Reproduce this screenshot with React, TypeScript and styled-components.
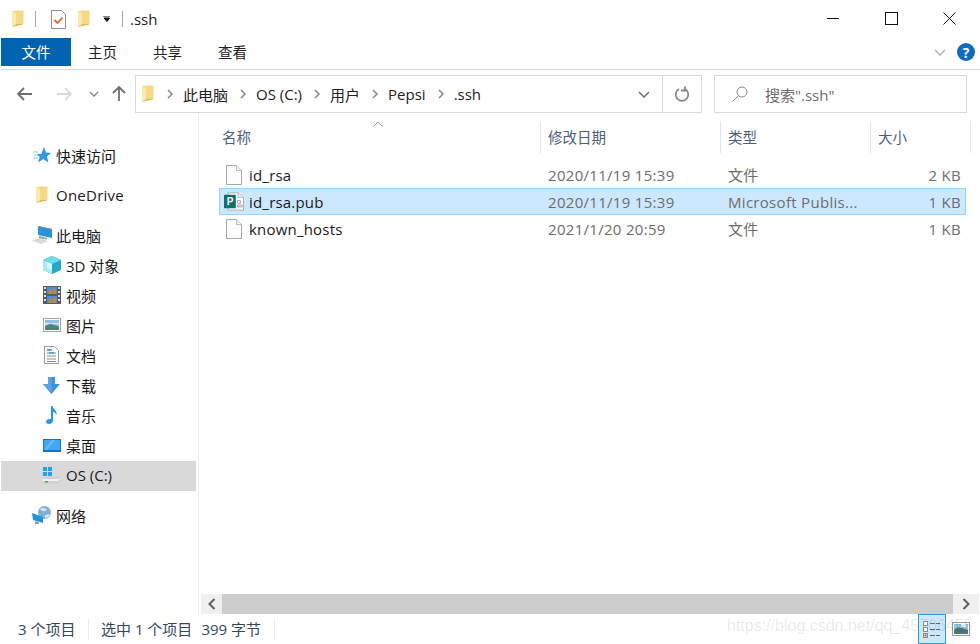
import styled, { createGlobalStyle } from 'styled-components';
import type { ReactNode } from 'react';

const GlobalStyle = createGlobalStyle`
  html, body {
    margin: 0;
    padding: 0;
    background: #fff;
  }
  body {
    font-family: "Open Sans", "Noto Sans CJK SC", sans-serif;
    font-size: 15px;
    color: #1a1a1a;
  }
`;

type IconProps = { size?: number };

const FolderIcon = () => (
  <svg width="14" height="18" viewBox="0 0 14 18">
    <path d="M1 1h11v13.5L1 17z" fill="#e9b850" />
    <path d="M1 1l4-.5h7.5V14H5z" fill="#f6d983" />
    <path d="M1 1v16l4-2.5V3z" fill="#fbe9ae" />
  </svg>
);

const BlankFileIcon = () => (
  <svg width="16" height="20" viewBox="0 0 16 20">
    <path d="M.5.5h10l5 5v14H.5z" fill="#fdfdfd" stroke="#a6a6a6" />
    <path d="M10.5.5v5h5" fill="#f2f2f2" stroke="#bdbdbd" />
  </svg>
);

const PublisherIcon = () => (
  <svg width="20" height="19" viewBox="0 0 22 20">
    <path d="M4.5.5h11l6 5v14h-17z" fill="#fff" stroke="#a6a6a6" />
    <path d="M15.5.5v5h6" fill="#eee" stroke="#b5b5b5" />
    <path d="M15 9h3v3h-3zM15 14h5v2h-5z" fill="none" stroke="#9a9a9a" />
    <rect x="0" y="2.500" width="13" height="15" rx="1" fill="#077568" />
    <text x="3" y="14" fontFamily="'Liberation Sans', sans-serif" fontSize="11" fontWeight="700" fill="#fff">
      P
    </text>
  </svg>
);

const QuickAccessIcon = () => (
  <svg width="18" height="17" viewBox="0 0 18 17">
    <path d="M11 0l2 5.6 5 .3-4 3.5 1.4 6L10.300 12 5 15.500l1.700-5.800L3.500 7h4.800z" fill="#2b9ae8" />
    <path d="M0 5h5M1 8h4M0 11h5" stroke="#8fcdf5" strokeWidth="1" />
  </svg>
);

const PcIcon = () => (
  <svg width="20" height="18" viewBox="0 0 20 18">
    <path d="M6 0l14 3v9L6 9z" fill="#2b93dd" />
    <path d="M6 0l14 3v1L6 1z" fill="#7b8b99" />
    <path d="M7 10l8 2v1.500L7 12z" fill="#8a9aa6" />
    <path d="M0 14.500L7 12l9 3-7 3z" fill="#d6dadd" />
  </svg>
);

const CubeIcon = () => (
  <svg width="18" height="18" viewBox="0 0 18 18">
    <path d="M9 0l9 4v10l-9 4-9-4V4z" fill="#21a9c6" />
    <path d="M0 4l9-4 9 4-9 4z" fill="#6fdcea" />
    <path d="M0 4l9 4v10l-9-4z" fill="#a7ecf2" />
    <path d="M4 6l5 2v6l-5-2z" fill="#d9f7f9" />
  </svg>
);

const VideoIcon = () => (
  <svg width="18" height="18" viewBox="0 0 18 18">
    <rect width="18" height="18" fill="#5b5b5b" />
    <path d="M1 1h2v2H1zM1 5h2v2H1zM1 9h2v2H1zM1 13h2v2H1zM15 1h2v2h-2zM15 5h2v2h-2zM15 9h2v2h-2zM15 13h2v2h-2z" fill="#ddd" />
    <rect x="4" y="1" width="10" height="7" fill="#4e8fd6" />
    <rect x="4" y="10" width="10" height="7" fill="#4e8fd6" />
    <path d="M6 4h3v4H6zM10 3h3v5h-3zM6 13h3v4H6zM10 12h3v5h-3z" fill="#c8862d" />
  </svg>
);

const PictureIcon = () => (
  <svg width="18" height="14" viewBox="0 0 18 14">
    <rect x=".5" y=".5" width="17" height="13" fill="#fff" stroke="#a3a3a3" />
    <rect x="2" y="2" width="14" height="10" fill="#8fc0e8" />
    <path d="M2 8l5-2 9 2.500V12H2z" fill="#4c8378" />
    <path d="M2 5h14v1.500L8 5.500 2 7z" fill="#dcebf5" />
  </svg>
);

const DocIcon = () => (
  <svg width="15" height="18" viewBox="0 0 15 18">
    <path d="M.5.5h10l4 4v13H.5z" fill="#fff" stroke="#9c9c9c" />
    <path d="M3 4h3M3 7h9M3 10h9M3 13h9M3 15.500h9" stroke="#8a8a8a" />
    <path d="M3 4h5M5 7h5" stroke="#3a9be0" strokeWidth="1.500" />
  </svg>
);

const DownloadIcon = () => (
  <svg width="17" height="17" viewBox="0 0 17 17">
    <path d="M5 0h7v7h5l-8.500 10L0 7h5z" fill="#3f93dd" />
    <path d="M5 0h3.500v17L0 7h5z" fill="#5aa6e6" />
  </svg>
);

const MusicIcon = () => (
  <svg width="12" height="18" viewBox="0 0 12 18">
    <path d="M5 0h1.500c.5 3 5 4.500 4 9-.7-2-2.500-3-3.500-3.300V14.500C7 16.500 5 18 3 18s-3-1-3-2.500S2 12.500 5 13z" fill="#1e9be8" />
  </svg>
);

const DesktopIcon = () => (
  <svg width="18" height="13" viewBox="0 0 18 13">
    <rect width="18" height="13" fill="#0a78c8" />
    <rect x="1" y="1" width="16" height="10" fill="#3da9f0" />
    <path d="M1 11l8-10h3L4 11z" fill="#63bcf4" />
  </svg>
);

const DriveIcon = () => (
  <svg width="20" height="18" viewBox="0 0 20 18">
    <path d="M1 13l4-3h11l4 2v3l-4 3H1z" fill="#cfd3d5" />
    <path d="M1 13h15l4-1-4 3H1z" fill="#f0f1f2" />
    <rect x="3" y="15" width="3" height="1.500" fill="#4aa651" />
    <path d="M1 1h4v4H1zM6 1h4v4H6zM1 6h4v4H1zM6 6h4v4H6z" fill="#19a8ef" />
  </svg>
);

const NetworkIcon = () => (
  <svg width="20" height="18" viewBox="0 0 20 18">
    <circle cx="12.500" cy="6.500" r="6.500" fill="#7fb1d6" />
    <path d="M8 3c3-2 6-1 7 1-2 1-5 2-7-1zM13 9l5-1c-1 3-3 4-5 4z" fill="#d8e7f1" />
    <path d="M0 7l11 4v6L1 14z" fill="#1e94dd" />
    <path d="M3 15l4 1.500V18H3z" fill="#8a9aa6" />
  </svg>
);

const DetailsViewIcon = () => (
  <svg width="18" height="17" viewBox="0 0 18 17">
    <rect x=".5" y=".5" width="4" height="4" fill="#fff" stroke="#8c8c8c" />
    <rect x=".5" y="6.500" width="4" height="4" fill="#fff" stroke="#8c8c8c" />
    <rect x=".5" y="12.500" width="4" height="4" fill="#fff" stroke="#8c8c8c" />
    <rect x="1.500" y="13.500" width="2" height="2" fill="#c0392b" />
    <path d="M7 2.500h5M13 2.500h4M7 8.500h5M13 8.500h4M7 14.500h5M13 14.500h4" stroke="#666" />
  </svg>
);

const ThumbViewIcon = () => (
  <svg width="18" height="14" viewBox="0 0 18 14">
    <rect x=".5" y=".5" width="17" height="13" fill="#fff" stroke="#9b9b9b" />
    <rect x="2" y="2" width="14" height="10" fill="#8cc3e6" />
    <path d="M2 8l4-3 10 3v4H2z" fill="#4a7a70" />
    <path d="M9 2h5v3H9z" fill="#dff0f7" />
  </svg>
);

const Chevron = ({ size = 6 }: IconProps) => (
  <svg width={size} height="10" viewBox="0 0 6 10">
    <path d="M1 1l4 4-4 4" fill="none" stroke="#848484" strokeWidth="1.500" />
  </svg>
);

const DownChevron = ({ color = '#6d6d6d' }: { color?: string }) => (
  <svg width="12" height="7" viewBox="0 0 12 7">
    <path d="M1 1l5 5 5-5" fill="none" stroke={color} strokeWidth="1.500" />
  </svg>
);

const ArrowIcon = ({ color, dir }: { color: string; dir: 'left' | 'right' | 'up' }) => {
  const rotate = dir === 'left' ? 0 : dir === 'right' ? 180 : 90;
  return (
    <svg width="16" height="16" viewBox="0 0 16 16" style={{ transform: `rotate(${rotate}deg)` }}>
      <path d="M1 8h14M7 2L1 8l6 6" fill="none" stroke={color} strokeWidth="1.800" />
    </svg>
  );
};

const navGroups: { icon: ReactNode; label: string; indent?: boolean; active?: boolean }[][] = [
  [{ icon: <QuickAccessIcon />, label: '快速访问' }],
  [{ icon: <FolderIcon />, label: 'OneDrive' }],
  [
    { icon: <PcIcon />, label: '此电脑' },
    { icon: <CubeIcon />, label: '3D 对象', indent: true },
    { icon: <VideoIcon />, label: '视频', indent: true },
    { icon: <PictureIcon />, label: '图片', indent: true },
    { icon: <DocIcon />, label: '文档', indent: true },
    { icon: <DownloadIcon />, label: '下载', indent: true },
    { icon: <MusicIcon />, label: '音乐', indent: true },
    { icon: <DesktopIcon />, label: '桌面', indent: true },
    { icon: <DriveIcon />, label: 'OS (C:)', indent: true, active: true },
  ],
  [{ icon: <NetworkIcon />, label: '网络' }],
];

const files = [
  { icon: <BlankFileIcon />, name: 'id_rsa', date: '2020/11/19 15:39', type: '文件', size: '2 KB' },
  { icon: <PublisherIcon />, name: 'id_rsa.pub', date: '2020/11/19 15:39', type: 'Microsoft Publis...', size: '1 KB', selected: true },
  { icon: <BlankFileIcon />, name: 'known_hosts', date: '2021/1/20 20:59', type: '文件', size: '1 KB' },
];

const crumbs = ['此电脑', 'OS (C:)', '用户', 'Pepsi', '.ssh'];

export default function App() {
  return (
    <Window>
      <GlobalStyle />
      <TitleBar>
        <QuickAccess>
          <FolderIcon />
          <TitleSep />
          <svg width="15" height="19" viewBox="0 0 15 19">
            <path d="M.5.500h10l4 4v14H.5z" fill="#fff" stroke="#8f8f8f" />
            <path d="M3.500 10l3 3 5-5.500" fill="none" stroke="#e8622a" strokeWidth="1.800" />
          </svg>
          <FolderIcon />
          <svg width="8" height="6" viewBox="0 0 8 6">
            <path d="M0 0h7M1 2h5.500L4 5.500z" stroke="#111" fill="#111" />
          </svg>
          <TitleSep />
        </QuickAccess>
        <TitleText>.ssh</TitleText>
        <WindowControls>
          <WindowButton>
            <svg width="13" height="13" viewBox="0 0 13 13">
              <path d="M0 6.500h12" stroke="#111" />
            </svg>
          </WindowButton>
          <WindowButton>
            <svg width="13" height="13" viewBox="0 0 13 13">
              <rect x=".5" y=".5" width="12" height="12" fill="none" stroke="#111" />
            </svg>
          </WindowButton>
          <WindowButton>
            <svg width="13" height="13" viewBox="0 0 13 13">
              <path d="M.5.500l12 12M12.500.500l-12 12" stroke="#111" />
            </svg>
          </WindowButton>
        </WindowControls>
      </TitleBar>

      <RibbonTabs>
        <FileTab>文件</FileTab>
        <RibbonTab>主页</RibbonTab>
        <RibbonTab>共享</RibbonTab>
        <RibbonTab>查看</RibbonTab>
        <RibbonRight>
          <DownChevron color="#b5b5b5" />
          <HelpBadge>?</HelpBadge>
        </RibbonRight>
      </RibbonTabs>

      <AddressRow>
        <NavButtons>
          <ArrowIcon color="#6f6f6f" dir="left" />
          <ArrowIcon color="#d9d9d9" dir="right" />
          <svg width="10" height="6" viewBox="0 0 10 6">
            <path d="M1 1l4 4 4-4" fill="none" stroke="#8a8a8a" strokeWidth="1.500" />
          </svg>
          <ArrowIcon color="#6f6f6f" dir="up" />
        </NavButtons>
        <AddressBox>
          <FolderIcon />
          <Crumbs>
            {crumbs.map((crumb) => (
              <Crumb key={crumb}>
                <Chevron />
                <span>{crumb}</span>
              </Crumb>
            ))}
          </Crumbs>
          <AddressDrop>
            <DownChevron />
          </AddressDrop>
          <RefreshCell>
            <svg width="16" height="16" viewBox="0 0 16 16">
              <path d="M11 3a6.300 6.300 0 1 1-6 0" fill="none" stroke="#858585" strokeWidth="1.800" />
              <path d="M4 .5V4.500H0" fill="none" stroke="#858585" strokeWidth="1.800" transform="translate(7 0)" />
            </svg>
          </RefreshCell>
        </AddressBox>
        <SearchBox>
          <svg width="16" height="16" viewBox="0 0 16 16">
            <circle cx="10" cy="6" r="5" fill="none" stroke="#8a8a8a" />
            <path d="M6.500 9.500L.5 15.500" stroke="#8a8a8a" />
          </svg>
          <span>搜索".ssh"</span>
        </SearchBox>
      </AddressRow>

      <Body>
        <Nav>
          {navGroups.map((group) => (
            <NavGroup key={group[0].label}>
              {group.map((item) => (
                <NavItem key={item.label} $indent={item.indent} $active={item.active}>
                  <NavIcon>{item.icon}</NavIcon>
                  <NavLabel $wide={item.label === 'OneDrive'}>{item.label}</NavLabel>
                </NavItem>
              ))}
            </NavGroup>
          ))}
        </Nav>
        <Content>
          <SortMark>
            <svg width="10" height="6" viewBox="0 0 10 6">
              <path d="M.5 5.500L5 1l4.500 4.500" fill="none" stroke="#9a9a9a" />
            </svg>
          </SortMark>
          <ColumnHeader>
            <HeaderCell $first>名称</HeaderCell>
            <HeaderCell>修改日期</HeaderCell>
            <HeaderCell>类型</HeaderCell>
            <HeaderCell>大小</HeaderCell>
          </ColumnHeader>
          <FileList>
            {files.map((file) => (
              <FileRow key={file.name} $selected={file.selected}>
                <NameCell>
                  <FileIconBox>{file.icon}</FileIconBox>
                  <span>{file.name}</span>
                </NameCell>
                <MetaCell>{file.date}</MetaCell>
                <MetaCell>{file.type}</MetaCell>
                <SizeCell>{file.size}</SizeCell>
              </FileRow>
            ))}
          </FileList>
          <ScrollBar>
            <ScrollButton>
              <svg width="8" height="12" viewBox="0 0 8 12">
                <path d="M6.500 1L1.500 6l5 5" fill="none" stroke="#606060" strokeWidth="2" />
              </svg>
            </ScrollButton>
            <ScrollThumb />
            <ScrollButton $wide>
              <svg width="8" height="12" viewBox="0 0 8 12">
                <path d="M1.500 1l5 5-5 5" fill="none" stroke="#606060" strokeWidth="2" />
              </svg>
            </ScrollButton>
          </ScrollBar>
        </Content>
      </Body>

      <StatusBar>
        <StatusCount>3 个项目</StatusCount>
        <StatusSelection>
          <span>选中 1 个项目</span>
          <span>399 字节</span>
        </StatusSelection>
        <ViewButtons>
          <ViewButton $active>
            <DetailsViewIcon />
          </ViewButton>
          <ViewButton>
            <ThumbViewIcon />
          </ViewButton>
        </ViewButtons>
        <Watermark>https://blog.csdn.net/qq_45706455</Watermark>
      </StatusBar>
    </Window>
  );
}

const Window = styled.div`
  width: 980px;
  height: 644px;
  display: flex;
  flex-direction: column;
  overflow: hidden;
  background: #fff;
`;

const TitleBar = styled.div`
  height: 38px;
  display: flex;
  align-items: center;
  padding-left: 11px;
`;

const QuickAccess = styled.div`
  display: flex;
  align-items: center;
  gap: 11px;

  > :nth-child(2) {
    margin-left: -1px;
  }

  > :nth-child(3) {
    margin-left: 4px;
  }

  > :nth-child(5) {
    margin-left: 1px;
  }
`;

const TitleSep = styled.div`
  width: 1px;
  height: 16px;
  background: #a8a8a8;
`;

const TitleText = styled.div`
  margin-left: 7px;
  font-size: 15px;
  color: #222;
`;

const WindowControls = styled.div`
  margin-left: auto;
  display: flex;
  padding-right: 2px;
`;

const WindowButton = styled.div`
  width: 58px;
  height: 38px;
  box-sizing: border-box;
  padding-bottom: 1px;
  display: flex;
  align-items: center;
  justify-content: center;
`;

const RibbonTabs = styled.div`
  height: 32px;
  padding: 0 5px 3px 0;
  box-sizing: border-box;
  display: flex;
  align-items: stretch;
  border-bottom: 1px solid #d9d9d9;
  margin-left: 1px;
`;

const FileTab = styled.div`
  width: 70px;
  margin-right: -1px;
  padding-bottom: 1px;
  box-sizing: border-box;
  background: #0063b1;
  color: #fff;
  display: flex;
  align-items: center;
  justify-content: center;
  font-size: 14.500px;
`;

const RibbonTab = styled.div`
  width: 65px;
  padding-bottom: 1px;
  box-sizing: border-box;
  display: flex;
  align-items: center;
  justify-content: center;
  font-size: 14.500px;
  color: #222;
`;

const RibbonRight = styled.div`
  margin-left: auto;
  display: flex;
  align-items: center;
  gap: 11px;
`;

const HelpBadge = styled.div`
  width: 18px;
  height: 18px;
  border-radius: 50%;
  background: #0f6cc4;
  color: #fff;
  font-size: 14px;
  font-weight: 700;
  display: flex;
  align-items: center;
  justify-content: center;
`;

const AddressRow = styled.div`
  height: 38px;
  margin-top: 5px;
  display: flex;
  align-items: stretch;
  padding-left: 17px;
`;

const NavButtons = styled.div`
  width: 118px;
  flex-shrink: 0;
  display: flex;
  align-items: center;
  gap: 17px;

  > svg:nth-child(2) {
    margin-left: 6px;
  }

  > svg:nth-child(4) {
    margin-left: -5px;
  }
`;

const AddressBox = styled.div`
  width: 567px;
  box-sizing: border-box;
  display: flex;
  align-items: center;
  padding-left: 5px;
  border: 1px solid #d9d9d9;
`;

const Crumbs = styled.div`
  display: flex;
  align-items: center;
  flex: 1;
`;

const Crumb = styled.div`
  display: flex;
  align-items: center;
  gap: 10px;
  margin-left: 12px;
  color: #222;
  white-space: nowrap;
`;

const AddressDrop = styled.div`
  width: 36px;
  height: 100%;
  display: flex;
  align-items: center;
  justify-content: center;
`;

const RefreshCell = styled.div`
  width: 38px;
  height: 100%;
  border-left: 1px solid #d9d9d9;
  display: flex;
  align-items: center;
  justify-content: center;
`;

const SearchBox = styled.div`
  width: 253px;
  box-sizing: border-box;
  margin-left: 12px;
  padding-left: 17px;
  border: 1px solid #d9d9d9;
  display: flex;
  align-items: center;
  gap: 17px;
  color: #6d6d6d;
`;

const Body = styled.div`
  flex: 1;
  min-height: 0;
  display: flex;
`;

const Nav = styled.div`
  width: 199px;
  box-sizing: border-box;
  padding: 28px 1px 0;
  border-right: 1px solid #ededed;
  display: flex;
  flex-direction: column;
  gap: 10px;
`;

const NavGroup = styled.div`
  display: flex;
  flex-direction: column;
`;

const NavItem = styled.div<{ $indent?: boolean; $active?: boolean }>`
  height: 30px;
  box-sizing: border-box;
  margin-right: 1px;
  padding-bottom: 2px;
  display: flex;
  align-items: center;
  gap: 4px;
  padding-left: ${(props) => (props.$indent ? '40px' : '30px')};
  background: ${(props) => (props.$active ? '#d9d9d9' : 'transparent')};
  color: #1a1a1a;
  white-space: nowrap;
`;

const NavIcon = styled.span`
  width: 21px;
  display: flex;
  align-items: center;
  justify-content: center;
`;

const NavLabel = styled.span<{ $wide?: boolean }>`
  letter-spacing: ${(props) => (props.$wide ? '0.25px' : '0')};
`;

const Content = styled.div`
  position: relative;
  flex: 1;
  min-width: 0;
  display: flex;
  flex-direction: column;
`;

const SortMark = styled.div`
  position: absolute;
  left: 174px;
  top: 8px;
  line-height: 0;
`;

const ColumnHeader = styled.div`
  margin-top: 8px;
  padding-left: 21px;
  height: 32px;
  display: grid;
  grid-template-columns: 321px 180px 150px 100px;
`;

const HeaderCell = styled.div<{ $first?: boolean }>`
  padding-left: ${(props) => (props.$first ? '2px' : '7px')};
  padding-bottom: 2px;
  box-sizing: border-box;
  border-right: 1px solid #e5e5e5;
  display: flex;
  align-items: center;
  color: #4c607a;
  font-size: 14.500px;
`;

const FileList = styled.div`
  margin-top: 8px;
  flex: 1;
  padding-left: 20px;
`;

const FileRow = styled.div<{ $selected?: boolean }>`
  width: 747px;
  height: 27px;
  box-sizing: border-box;
  display: grid;
  grid-template-columns: 321px 180px 150px 90px;
  align-items: center;
  border: 1px solid ${(props) => (props.$selected ? '#99d1ff' : 'transparent')};
  background: ${(props) => (props.$selected ? '#cce8ff' : 'transparent')};
`;

const NameCell = styled.div`
  display: flex;
  align-items: center;
  gap: 3px;
  color: #1a1a1a;
  letter-spacing: 0.2px;
`;

const FileIconBox = styled.span`
  width: 24px;
  display: flex;
  align-items: center;
  justify-content: center;
  margin-left: 2px;
`;

const MetaCell = styled.div`
  padding-left: 7px;
  color: #6d6d6d;
  white-space: nowrap;
  letter-spacing: 0.3px;
`;

const SizeCell = styled(MetaCell)`
  text-align: right;
`;

const ScrollBar = styled.div`
  height: 20px;
  margin: 0 1px 0 2px;
  display: flex;
`;

const ScrollButton = styled.div<{ $wide?: boolean }>`
  width: ${(props) => (props.$wide ? '26px' : '21px')};
  background: #f0f0f0;
  display: flex;
  align-items: center;
  justify-content: center;
`;

const ScrollThumb = styled.div`
  flex: 1;
  background: #cdcdcd;
`;

const StatusBar = styled.div`
  position: relative;
  height: 30px;
  display: flex;
  align-items: center;
  font-size: 15px;
  color: #33475f;
`;

const StatusCount = styled.div`
  width: 89px;
  box-sizing: border-box;
  padding: 0 0 1px 18px;
  border-right: 1px solid #ededed;
  white-space: nowrap;
`;

const StatusSelection = styled.div`
  width: 186px;
  box-sizing: border-box;
  padding: 0 0 1px 12px;
  border-right: 1px solid #ededed;
  display: flex;
  gap: 9px;
  white-space: nowrap;
`;

const ViewButtons = styled.div`
  margin-left: auto;
  margin-right: 5px;
  display: flex;
  align-items: stretch;
  height: 100%;
  gap: 1px;
`;

const ViewButton = styled.div<{ $active?: boolean }>`
  width: 28px;
  box-sizing: border-box;
  display: flex;
  align-items: center;
  justify-content: center;
  background: ${(props) => (props.$active ? '#cce8ff' : 'transparent')};
  border: 1px solid ${(props) => (props.$active ? '#26a0da' : 'transparent')};
`;

const Watermark = styled.div`
  position: absolute;
  left: 727px;
  top: 3px;
  font-family: "Liberation Sans", sans-serif;
  font-size: 16px;
  color: rgba(0, 0, 0, 0.1);
  white-space: nowrap;
  pointer-events: none;
`;
